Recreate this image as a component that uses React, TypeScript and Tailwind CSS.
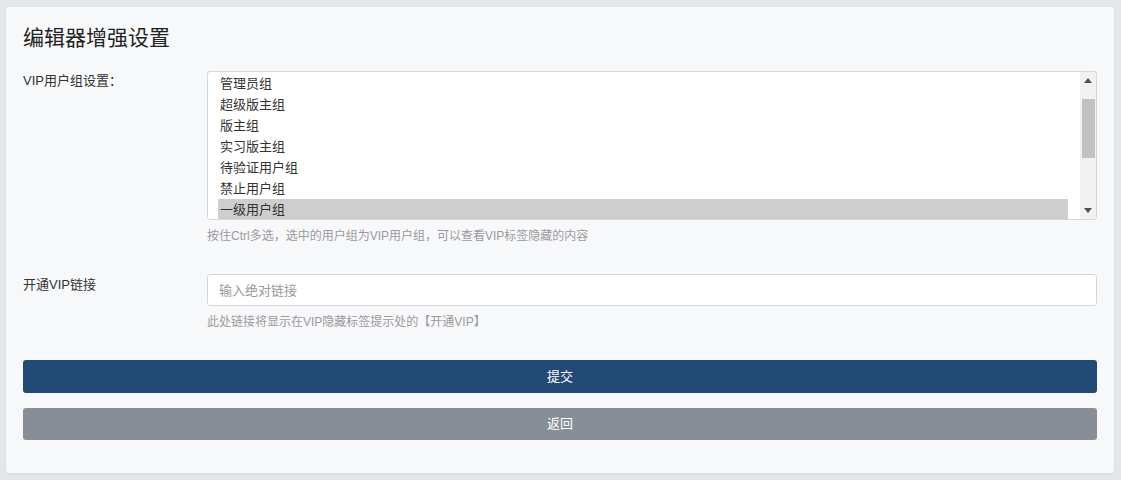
import { useState } from 'react'

const groups = ['管理员组', '超级版主组', '版主组', '实习版主组', '待验证用户组', '禁止用户组', '一级用户组']

const font = { fontFamily: '"Liberation Sans", "Noto Sans CJK SC", sans-serif' }

export default function App() {
  const [selected, setSelected] = useState<string[]>(['一级用户组'])
  const [link, setLink] = useState('')

  const toggle = (g: string) => {
    setSelected((s) => (s.includes(g) ? s.filter((x) => x !== g) : [...s, g]))
  }

  return (
    <div className="min-h-screen bg-[#e4e6ea] pl-[6px] pr-[7px] pt-[7px] pb-[7px]" style={font}>
      <div className="bg-[#f7f8fa] rounded-[2px] shadow-[0_1px_2px_rgba(0,0,0,0.08)] px-[17px] pt-[17px] pb-[33px]">
        <h1 className="text-[21px] leading-[28px] text-[#222] font-normal">编辑器增强设置</h1>

        {/* VIP用户组 */}
        <div className="flex mt-[19px]">
          <label className="w-[184px] shrink-0 text-[13px] leading-[20px] text-[#333]">VIP用户组设置：</label>
          <div className="flex-1">
            <div className="h-[149px] bg-white border border-[#d5d7da] rounded-[3px] flex overflow-hidden">
              <div className="flex-1 pl-[10px] pt-[1px]">
                {groups.map((g) => (
                  <div
                    key={g}
                    onClick={() => toggle(g)}
                    className={
                      'h-[21px] leading-[21px] pl-[2px] text-[13px] text-[#333] cursor-default ' +
                      (selected.includes(g) ? 'bg-[#cecece] text-[#111]' : '')
                    }
                  >
                    {g}
                  </div>
                ))}
              </div>
              <div className="w-[12px] shrink-0" />
              <div className="w-[16px] shrink-0 bg-[#f1f1f1] flex flex-col items-center">
                <div className="h-[17px] flex items-center justify-center">
                  <svg width="8" height="5" viewBox="0 0 8 5">
                    <path d="M4 0 L8 5 L0 5 Z" fill="#505050" />
                  </svg>
                </div>
                <div className="w-[13px] h-[59px] bg-[#c1c1c1] mt-[10px]" />
                <div className="flex-1" />
                <div className="h-[17px] flex items-center justify-center">
                  <svg width="8" height="5" viewBox="0 0 8 5">
                    <path d="M0 0 L8 0 L4 5 Z" fill="#505050" />
                  </svg>
                </div>
              </div>
            </div>
            <p className="mt-[7px] text-[12px] leading-[18px] text-[#9a9a9a]">
              按住Ctrl多选，选中的用户组为VIP用户组，可以查看VIP标签隐藏的内容
            </p>
          </div>
        </div>

        {/* 开通VIP链接 */}
        <div className="flex mt-[29px]">
          <label className="w-[184px] shrink-0 text-[13px] leading-[20px] text-[#333] pt-[1px]">开通VIP链接</label>
          <div className="flex-1">
            <input
              type="text"
              value={link}
              onChange={(e) => setLink(e.target.value)}
              placeholder="输入绝对链接"
              className="w-full h-[32px] bg-white border border-[#d5d7da] rounded-[3px] px-[11px] text-[13px] text-[#333] placeholder:text-[#999] outline-none"
            />
            <p className="mt-[7px] text-[12px] leading-[18px] text-[#9a9a9a]">
              此处链接将显示在VIP隐藏标签提示处的【开通VIP】
            </p>
          </div>
        </div>

        {/* 按钮 */}
        <button className="mt-[29px] w-full h-[33px] rounded-[3px] bg-[#214a77] text-white text-[13px]">
          提交
        </button>
        <button className="mt-[15px] w-full h-[32px] rounded-[3px] bg-[#878e96] text-white text-[13px]">
          返回
        </button>
      </div>
    </div>
  )
}
